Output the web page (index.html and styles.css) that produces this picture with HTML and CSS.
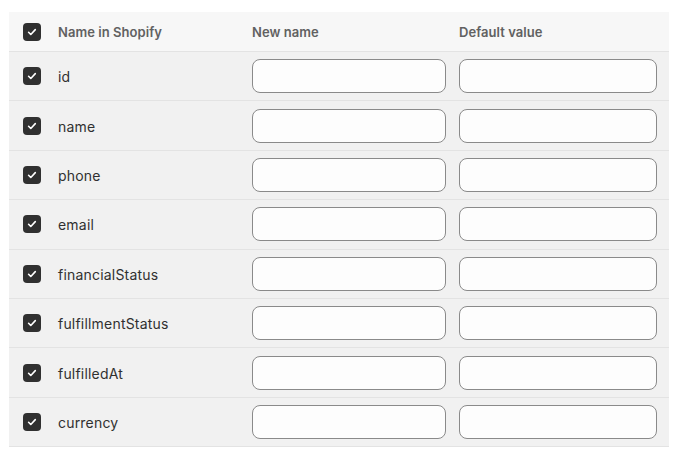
FILE: index.html
```html
<!DOCTYPE html>
<html>
<head>
<meta charset="utf-8">
<link rel="stylesheet" href="styles.css">
</head>
<body>
<div class="table">
  <div class="row head">
    <span class="cb"><svg viewBox="0 0 18 18"><path d="M5.6 9.3l2.2 2.2 4.5-4.9" /></svg></span>
    <span class="th">Name in Shopify</span>
    <span class="th">New name</span>
    <span class="th">Default value</span>
  </div>
  <div class="row"><span class="cb"><svg viewBox="0 0 18 18"><path d="M5.6 9.3l2.2 2.2 4.5-4.9" /></svg></span><span class="name">id</span><input class="field narrow"><input class="field"></div>
  <div class="row"><span class="cb"><svg viewBox="0 0 18 18"><path d="M5.6 9.3l2.2 2.2 4.5-4.9" /></svg></span><span class="name">name</span><input class="field narrow"><input class="field"></div>
  <div class="row"><span class="cb"><svg viewBox="0 0 18 18"><path d="M5.6 9.3l2.2 2.2 4.5-4.9" /></svg></span><span class="name">phone</span><input class="field narrow"><input class="field"></div>
  <div class="row"><span class="cb"><svg viewBox="0 0 18 18"><path d="M5.6 9.3l2.2 2.2 4.5-4.9" /></svg></span><span class="name">email</span><input class="field narrow"><input class="field"></div>
  <div class="row"><span class="cb"><svg viewBox="0 0 18 18"><path d="M5.6 9.3l2.2 2.2 4.5-4.9" /></svg></span><span class="name">financialStatus</span><input class="field narrow"><input class="field"></div>
  <div class="row"><span class="cb"><svg viewBox="0 0 18 18"><path d="M5.6 9.3l2.2 2.2 4.5-4.9" /></svg></span><span class="name">fulfillmentStatus</span><input class="field narrow"><input class="field"></div>
  <div class="row"><span class="cb"><svg viewBox="0 0 18 18"><path d="M5.6 9.3l2.2 2.2 4.5-4.9" /></svg></span><span class="name">fulfilledAt</span><input class="field narrow"><input class="field"></div>
  <div class="row"><span class="cb"><svg viewBox="0 0 18 18"><path d="M5.6 9.3l2.2 2.2 4.5-4.9" /></svg></span><span class="name">currency</span><input class="field narrow"><input class="field"></div>
</div>
</body>
</html>
```
FILE: styles.css
```css
html, body {
  margin: 0;
  background: #ffffff;
}
body {
  padding: 12px 7px 0 9px;
  font-family: Inter, "Noto Sans", sans-serif;
  color: #303030;
}
.table {
  width: 660px;
  background: #f1f1f1;
}
.row {
  display: grid;
  grid-template-columns: 35px 194px 207px 198px;
  align-items: center;
  padding: 0 12px 0 14px;
  height: 49.4px;
  box-sizing: border-box;
  border-bottom: 1px solid #e3e3e3;
}
.row.head {
  height: 40px;
  background: #f7f7f7;
}
.th {
  font-size: 13px;
  font-weight: 600;
  color: #616161;
  letter-spacing: 0.05px;
}
.name {
  font-size: 14px;
  color: #303030;
  letter-spacing: 0.2px;
  padding-top: 1px;
}
.cb {
  width: 18px;
  height: 18px;
  border-radius: 4px;
  background: #303030;
  display: flex;
}
.cb svg {
  width: 18px;
  height: 18px;
  fill: none;
  stroke: #ffffff;
  stroke-width: 1.6;
  stroke-linecap: round;
  stroke-linejoin: round;
}
.field {
  height: 34px;
  width: 198px;
  box-sizing: border-box;
  border: 1px solid #8a8a8a;
  border-radius: 8px;
  background: #fdfdfd;
  margin: 0;
  padding: 0 10px;
}
.field.narrow {
  width: 194px;
}
```
